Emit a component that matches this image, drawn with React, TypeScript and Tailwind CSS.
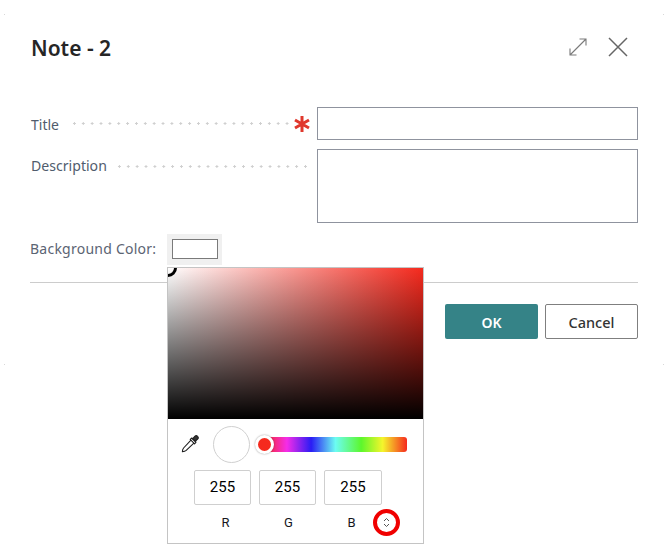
import React from "react";

const dots = "flex-1 h-[3px] bg-[radial-gradient(circle,#cfcfcf_1.1px,transparent_1.4px)] bg-[length:8.87px_3px] bg-repeat-x";

function Eyedropper() {
  return (
    <svg width="18" height="18" viewBox="0 0 18 18" fill="none" stroke="#1f1f1f" strokeWidth="1.1" strokeLinejoin="round" strokeLinecap="round">
      <path d="M10.4 4.6 L13.4 7.6 L5.2 15.4 C4.2 16.2 2.6 16.6 1.4 16.8 C1.4 15.4 1.8 14 2.6 13 Z" fill="#fff" />
      <path d="M9.2 4.4 L10.8 3 L15 7.2 L13.6 8.8 Z" fill="#fff" />
      <path d="M11.6 3.8 L13.8 1.4 C14.6 0.6 15.8 0.6 16.6 1.4 C17.4 2.2 17.4 3.4 16.6 4.2 L14.2 6.4 Z" fill="#333" />
    </svg>
  );
}

function NumBox({ v, w }: { v: string; w: string }) {
  return (
    <div className={`${w} h-[35px] flex items-center justify-center border border-[#cfcfcf] rounded-[2px] text-[15px] text-black`}>{v}</div>
  );
}

function Speck({ pos }: { pos: string }) {
  return <div className={`absolute w-px h-px bg-[#d8d8d8] ${pos}`} />;
}

export default function App() {
  return (
    <div className="relative w-[670px] h-[551px] overflow-hidden bg-white pl-[30px] pr-[32px] font-['Noto_Sans','Open_Sans',sans-serif]">
      <Speck pos="left-[4px] top-[14px]" />
      <Speck pos="left-[663px] top-[14px]" />
      <Speck pos="left-[4px] top-[364px]" />
      <Speck pos="left-[663px] top-[364px]" />

      <div className="flex items-center h-[96px] pl-px">
        <h1 className="flex-1 text-[21px] font-semibold leading-7 text-[#262626]">Note - 2</h1>
        <svg width="18" height="18" viewBox="0 0 18 18" fill="none" stroke="#7a7a7a" strokeWidth="1.1" className="mr-[21px] -mt-[2px]">
          <path d="M1 17 L17 1 M10.5 1 H17 V7.5 M1 10.5 V17 H7.5" />
        </svg>
        <svg width="20" height="20" viewBox="0 0 20 20" fill="none" stroke="#666" strokeWidth="1.5" className="mr-[10px] -mt-[2px]">
          <path d="M1 1 L19 19 M19 1 L1 19" />
        </svg>
      </div>

      <div className="mt-[11px] flex h-[33px] items-center">
        <span className="w-[40px] pl-px pt-[2px] text-[14px] text-[#505c6d]">Title</span>
        <div className={dots} />
        <svg width="16" height="16" viewBox="0 0 16 16" stroke="#e0382d" strokeWidth="3" className="ml-[2px] mr-[7px]">
          <path d="M8 0 V16 M1 4 L15 12 M15 4 L1 12" />
        </svg>
        <div className="w-[321px] h-[33px] border border-[#8f939e] bg-white" />
      </div>

      <div className="mt-[9px] flex h-[74px]">
        <span className="w-[85px] h-[34px] flex items-center pl-px text-[14.1px] whitespace-nowrap text-[#505c6d]">Description</span>
        <div className={`${dots} mt-[16px] mr-[7px]`} />
        <div className="w-[321px] h-[74px] border border-[#8f939e] bg-white" />
      </div>

      <div className="mt-[10px] flex items-center h-[32px]">
        <span className="w-[137px] pb-[2px] text-[14px] tracking-[0.24px] text-[#5b6473]">Background Color:</span>
        <div className="w-[55px] h-[31px] bg-[#f0f0f0] flex items-center justify-center">
          <div className="w-[46px] h-[20px] bg-white border border-[#7a7a7a]" />
        </div>
      </div>

      <div className="mt-[17px] h-px w-[608px] bg-[#cccccc]" />

      <div className="mt-[21px] flex justify-end gap-[7px]">
        <button className="w-[93px] h-[35px] pt-[2px] rounded-[2px] bg-[#358387] text-white text-[14px] font-semibold">OK</button>
        <button className="w-[93px] h-[35px] pt-[2px] rounded-[2px] border border-[#7f7f7f] bg-white text-[#333] text-[14.5px] font-medium">Cancel</button>
      </div>

      <div className="absolute left-[167px] top-[267px] w-[257px] h-[277px] border border-[#c4c4c4] bg-white font-['Roboto',sans-serif]">
        <div className="relative h-[151px] overflow-hidden bg-[linear-gradient(to_top,#000,transparent),linear-gradient(to_right,#fff,#f52a1e)]">
          <div className="absolute -left-[9px] -top-[9px] w-[18px] h-[18px] rounded-full border-[3px] border-black" />
        </div>
        <div className="flex items-center h-[50px] pl-[13px]">
          <Eyedropper />
          <div className="ml-[14px] w-[37px] h-[37px] rounded-full border border-[#d0d0d0] bg-white" />
          <div className="relative ml-[14px] w-[143px] h-[15px] rounded-[3px] bg-[linear-gradient(to_right,#f52a1e_0%,#f52ce8_16%,#2a1cf5_33%,#6cfcf2_50%,#5cf72c_68%,#f5f52c_83%,#f52a1e_100%)]">
            <div className="absolute -left-[9px] -top-[2px] w-[19px] h-[19px] rounded-full bg-[#f52a1e] border-[3px] border-white shadow-[0_0_2px_rgba(0,0,0,0.4)]" />
          </div>
        </div>
        <div className="flex pl-[26px] gap-[8px] mt-px">
          <NumBox v="255" w="w-[57px]" />
          <NumBox v="255" w="w-[57px]" />
          <NumBox v="255" w="w-[58px]" />
        </div>
        <div className="flex items-center h-[27px] mt-[4px] pl-[26px] text-[13px] text-[#16161d]">
          <span className="w-[63px] text-center">R</span>
          <span className="w-[63px] text-center">G</span>
          <span className="w-[63px] text-center">B</span>
          <div className="-ml-[10px] w-[27px] h-[27px] rounded-full border-[4px] border-[#f00000] flex items-center justify-center">
            <svg width="7" height="11" viewBox="0 0 7 11" fill="none" stroke="#555" strokeWidth="1">
              <path d="M1 4 L3.5 1.5 L6 4 M1 7 L3.5 9.5 L6 7" />
            </svg>
          </div>
        </div>
      </div>
    </div>
  );
}
